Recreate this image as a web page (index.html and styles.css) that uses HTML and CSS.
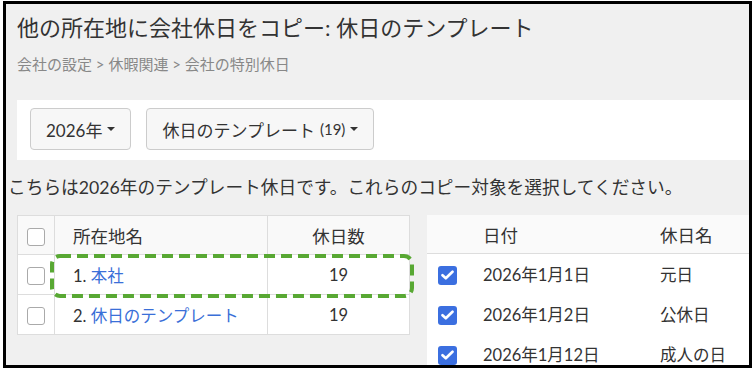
FILE: index.html
```html
<!DOCTYPE html>
<html lang="ja">
<head>
<meta charset="utf-8">
<link rel="stylesheet" href="styles.css">
</head>
<body>
<div class="frame">
  <h1 class="title">他の所在地に会社休日をコピー: 休日のテンプレート</h1>
  <div class="crumbs">会社の設定 &gt; 休暇関連 &gt; 会社の特別休日</div>
  <div class="panel">
    <button class="btn">2026年 <span class="caret"></span></button>
    <button class="btn">休日のテンプレート <span class="small">(19)</span> <span class="caret"></span></button>
  </div>
  <p class="note">こちらは2026年のテンプレート休日です。これらのコピー対象を選択してください。</p>
  <div class="tables">
    <div class="left-wrap">
      <table class="loc">
        <thead>
          <tr><th class="cb"><span class="box"></span></th><th class="name">所在地名</th><th class="num">休日数</th></tr>
        </thead>
        <tbody>
          <tr class="r1"><td class="cb"><span class="box"></span></td><td class="name">1. <a class="link">本社</a></td><td class="num">19</td></tr>
          <tr class="r2"><td class="cb"><span class="box"></span></td><td class="name">2. <a class="link">休日のテンプレート</a></td><td class="num">19</td></tr>
        </tbody>
      </table>
      <svg class="mark" width="364" height="44" viewBox="0 0 364 44">
        <rect x="2" y="2" width="360" height="40" rx="8" ry="8" fill="none" stroke="#58a833" stroke-width="4" stroke-dasharray="11 6"/>
      </svg>
    </div>
    <table class="days">
      <thead>
        <tr><th class="cb"></th><th class="date">日付</th><th class="hname">休日名</th></tr>
      </thead>
      <tbody>
        <tr><td class="cb"><span class="chk"><svg width="13" height="10" viewBox="0 0 13 10"><path d="M1.5 5.2 L4.8 8.3 L11.5 1.7" fill="none" stroke="#fff" stroke-width="2.6" stroke-linecap="round" stroke-linejoin="round"/></svg></span></td><td class="date">2026年1月1日</td><td class="hname">元日</td></tr>
        <tr><td class="cb"><span class="chk"><svg width="13" height="10" viewBox="0 0 13 10"><path d="M1.5 5.2 L4.8 8.3 L11.5 1.7" fill="none" stroke="#fff" stroke-width="2.6" stroke-linecap="round" stroke-linejoin="round"/></svg></span></td><td class="date">2026年1月2日</td><td class="hname">公休日</td></tr>
        <tr><td class="cb"><span class="chk"><svg width="13" height="10" viewBox="0 0 13 10"><path d="M1.5 5.2 L4.8 8.3 L11.5 1.7" fill="none" stroke="#fff" stroke-width="2.6" stroke-linecap="round" stroke-linejoin="round"/></svg></span></td><td class="date">2026年1月12日</td><td class="hname">成人の日</td></tr>
      </tbody>
    </table>
  </div>
</div>
</body>
</html>
```

FILE: styles.css
```css
html, body {
  margin: 0;
  padding: 0;
  background: #fff;
}
body {
  font-family: Lato, "Noto Sans CJK JP", sans-serif;
  color: #333;
}
.frame {
  margin: 1px 2px 0 3px;
  border: 3px solid #000;
  height: 361px;
  background: #f0f0f0;
  overflow: hidden;
}
.title {
  margin: 11px 0 0 11px;
  font-size: 22px;
  line-height: 26px;
  font-weight: normal;
  color: #333;
  white-space: nowrap;
}
.crumbs {
  margin: 13px 0 0 11px;
  font-size: 15px;
  line-height: 20px;
  color: #888;
}
.panel {
  margin: 26px 0 0 11px;
  height: 60px;
  box-sizing: border-box;
  padding: 8px 13px 0;
  background: #fff;
  display: flex;
  gap: 15px;
}
.btn {
  height: 42px;
  box-sizing: border-box;
  padding: 0 15px;
  border: 1px solid #ccc;
  border-radius: 4px;
  background: #f7f7f7;
  font-family: Lato, "Noto Sans CJK JP", sans-serif;
  font-size: 17px;
  color: #333;
  display: flex;
  align-items: center;
  gap: 5px;
}
.btn .small {
  font-size: 15px;
}
.caret {
  display: inline-block;
  width: 0;
  height: 0;
  border-left: 4px solid transparent;
  border-right: 4px solid transparent;
  border-top: 4px solid #333;
}
.note {
  margin: 16px 0 0 2px;
  font-size: 17.7px;
  line-height: 24px;
  white-space: nowrap;
}
.tables {
  margin: 15px 0 0 11px;
  display: flex;
  gap: 17px;
  align-items: flex-start;
}
.left-wrap {
  position: relative;
}
table {
  border-collapse: collapse;
  font-size: 16.5px;
}
.loc {
  width: 393px;
  background: #fff;
  border: 1px solid #ddd;
}
.loc th, .loc td {
  border: 1px solid #ddd;
  font-weight: normal;
  padding: 0;
}
.loc thead th {
  background: #f9f9f9;
  height: 38px;
  font-size: 17.5px;
}
.loc tbody td {
  height: 39px;
}
.loc .cb {
  width: 36px;
  text-align: center;
}
.loc .name {
  text-align: left;
  padding-left: 18px;
}
.loc .num {
  width: 141px;
  text-align: center;
}
.box {
  display: inline-block;
  width: 16px;
  height: 16px;
  border: 1.5px solid #aaa;
  border-radius: 3px;
  background: #fff;
  vertical-align: middle;
}
.link {
  color: #3a6fd8;
}
.mark {
  position: absolute;
  left: 33px;
  top: 39px;
}
.days {
  width: 400px;
  background: #fff;
  flex: none;
}
.days th, .days td {
  font-weight: normal;
  text-align: left;
  padding: 0;
}
.days thead th {
  background: #fafafa;
  height: 38px;
  border-bottom: 1px solid #ddd;
  font-size: 17.5px;
}
.days tbody td {
  height: 40px;
}
.days .cb {
  width: 41px;
  text-align: center;
}
.days .date {
  width: 162px;
  padding-left: 15px;
}
.days .hname {
  padding-left: 15px;
}
.chk {
  display: inline-flex;
  align-items: center;
  justify-content: center;
  width: 19px;
  height: 19px;
  border-radius: 3px;
  background: #3b6fe0;
  vertical-align: middle;
}
```
